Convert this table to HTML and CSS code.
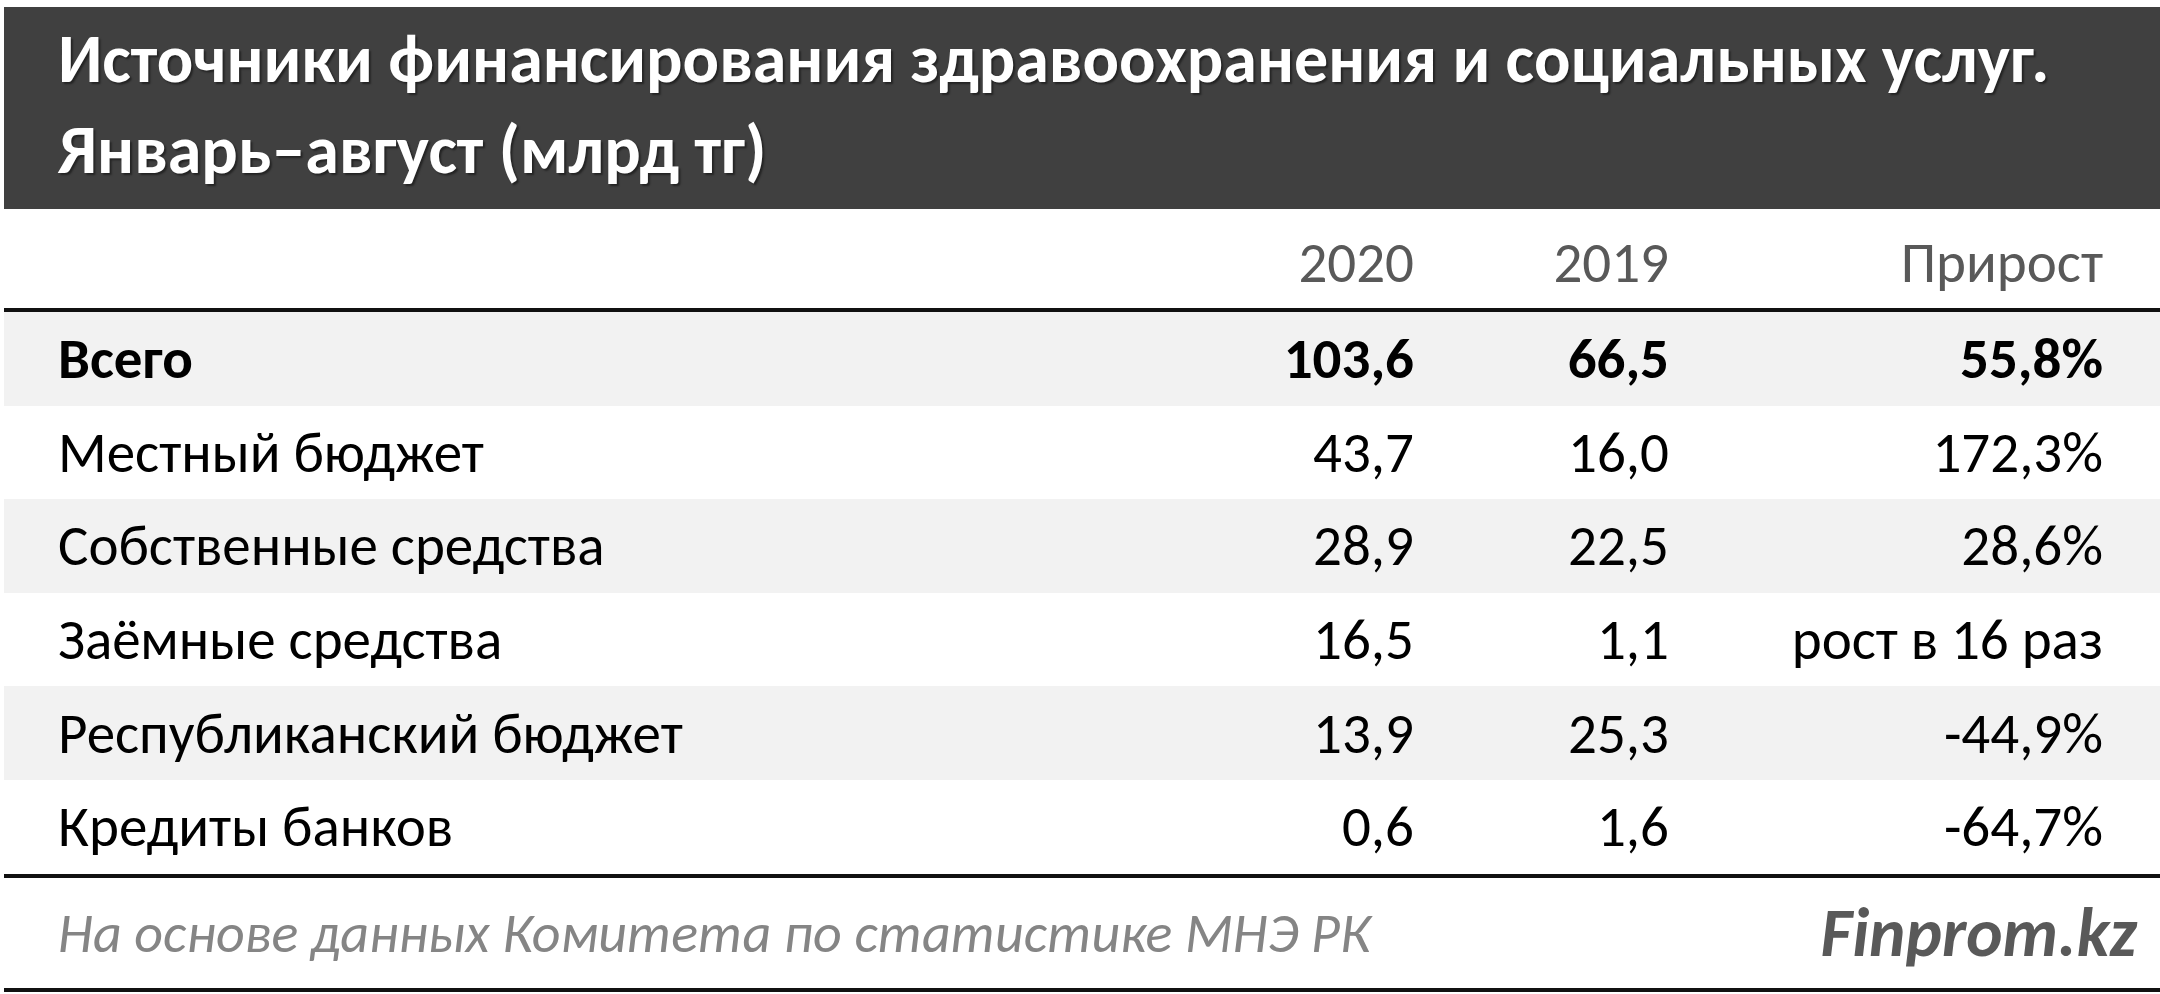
FILE: index.html
```html
<!DOCTYPE html>
<html lang="ru">
<head>
<meta charset="utf-8">
<title>Источники финансирования здравоохранения</title>
<link rel="stylesheet" href="styles.css">
</head>
<body>
<div class="table">
  <div class="head">
    <div class="title">Источники финансирования здравоохранения и социальных услуг.<br>Январь–август (млрд тг)</div>
  </div>
  <div class="row colhead">
    <div></div><div class="num">2020</div><div class="num">2019</div><div class="num">Прирост</div>
  </div>
  <div class="row shade bold">
    <div>Всего</div><div class="num">103,6</div><div class="num">66,5</div><div class="num">55,8%</div>
  </div>
  <div class="row">
    <div>Местный бюджет</div><div class="num">43,7</div><div class="num">16,0</div><div class="num">172,3%</div>
  </div>
  <div class="row shade">
    <div>Собственные средства</div><div class="num">28,9</div><div class="num">22,5</div><div class="num">28,6%</div>
  </div>
  <div class="row">
    <div>Заёмные средства</div><div class="num">16,5</div><div class="num">1,1</div><div class="num">рост в 16 раз</div>
  </div>
  <div class="row shade">
    <div>Республиканский бюджет</div><div class="num">13,9</div><div class="num">25,3</div><div class="num">-44,9%</div>
  </div>
  <div class="row last">
    <div>Кредиты банков</div><div class="num">0,6</div><div class="num">1,6</div><div class="num">-64,7%</div>
  </div>
  <div class="foot">
    <div class="source">На основе данных Комитета по статистике МНЭ РК</div>
    <div class="brand">Finprom.kz</div>
  </div>
</div>
</body>
</html>
```

FILE: styles.css
```css
html, body {
  margin: 0;
  padding: 0;
  background: #ffffff;
}
body {
  font-family: "Carlito", "Noto Sans", "Open Sans", sans-serif;
  color: #000;
  overflow: hidden;
}
.table {
  margin: 7px 0 0 4px;
  width: 2156px;
}
.head {
  height: 202px;
  box-sizing: border-box;
  background: #404040;
  padding: 6px 0 0 54px;
}
.title {
  color: #ffffff;
  font-weight: 700;
  font-size: 68px;
  line-height: 91px;
  white-space: nowrap;
  text-shadow: 2px 2px 2px rgba(0,0,0,0.45);
}
.row {
  display: grid;
  grid-template-columns: 1fr 300px 255px 434px;
  align-items: center;
  height: 93.6px;
  padding: 0 57px 0 54px;
  font-size: 57px;
  white-space: nowrap;
}
.row .num {
  text-align: right;
}
.colhead {
  color: #595959;
  border-bottom: 4px solid #111;
  box-sizing: border-box;
  height: 103px;
  padding-top: 8px;
}
.shade {
  background: #f2f2f2;
}
.bold {
  font-weight: 700;
}
.last {
  border-bottom: 4px solid #111;
}
.foot {
  display: flex;
  justify-content: space-between;
  align-items: center;
  height: 114px;
  padding: 0 23px 0 54px;
  box-sizing: border-box;
  border-bottom: 4px solid #111;
}
.source {
  font-style: italic;
  font-size: 56px;
  color: #858585;
}
.brand {
  font-style: italic;
  font-weight: 700;
  font-size: 69px;
  color: #595959;
}
```
